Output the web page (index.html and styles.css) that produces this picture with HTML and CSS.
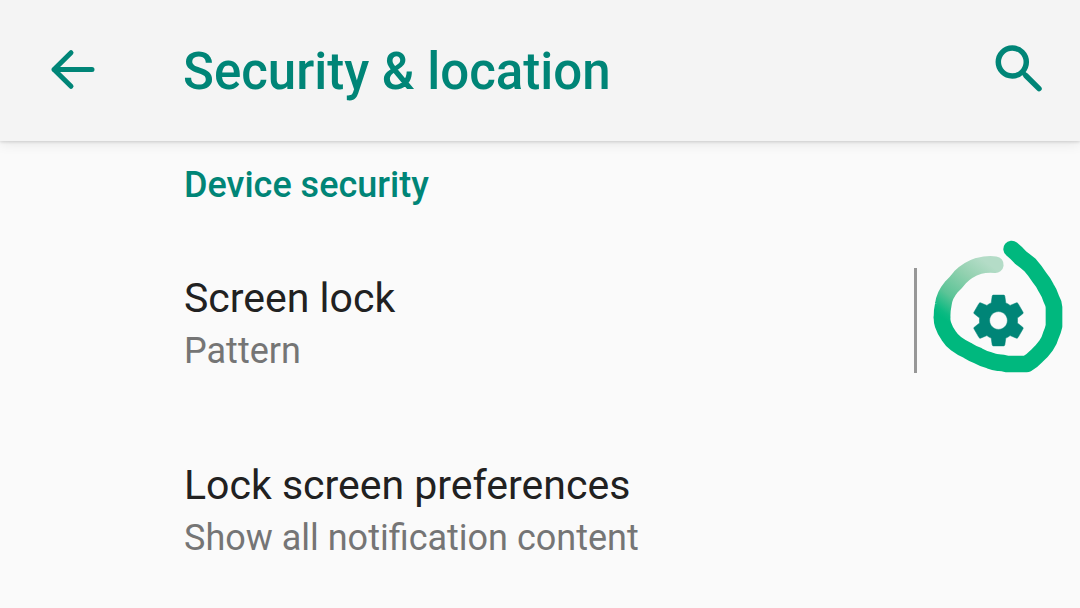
FILE: index.html
```html
<!DOCTYPE html>
<html lang="en">
<head>
<meta charset="utf-8">
<meta name="viewport" content="width=device-width, initial-scale=1">
<title>Security &amp; location</title>
<link rel="stylesheet" href="styles.css">
</head>
<body>
<header class="app-bar">
  <button class="icon-button back" type="button" aria-label="Navigate up">
    <svg class="icon" viewBox="0 0 60 60" aria-hidden="true">
      <path d="M29 12.700L12 29.500L29 46.300M12 29.500H50" fill="none" stroke="currentColor" stroke-width="5" stroke-linecap="round" stroke-linejoin="round"/>
    </svg>
  </button>
  <h1 class="title">Security &amp; location</h1>
  <button class="icon-button search" type="button" aria-label="Search">
    <svg class="icon" viewBox="0 0 60 60" aria-hidden="true">
      <g fill="none" stroke="currentColor" stroke-width="5.500">
        <circle cx="22.300" cy="22" r="14"/>
        <path d="M32 31.700l3 3" stroke-width="4.500"/>
        <path d="M36 35.700L49 48.600" stroke-linecap="round"/>
      </g>
    </svg>
  </button>
</header>
<main class="content">
  <h2 class="section-title">Device security</h2>
  <ul class="preferences">
    <li class="preference">
      <a class="preference-link" href="#screen-lock">
        <span class="name">Screen lock</span>
        <span class="summary">Pattern</span>
      </a>
      <button class="settings" type="button" aria-label="Screen lock settings">
        <svg class="gear" viewBox="0 0 24 24" aria-hidden="true">
          <path fill="currentColor" stroke="currentColor" stroke-width="0.200" stroke-linejoin="round" d="M19.430 12.980c.04-.32.07-.64.07-.98s-.03-.66-.07-.98l2.110-1.650c.19-.15.24-.42.12-.64l-2-3.460c-.12-.22-.39-.3-.61-.22l-2.490 1c-.52-.4-1.080-.73-1.690-.98l-.38-2.650C14.460 2.180 14.250 2 14 2h-4c-.25 0-.46.18-.49.42l-.38 2.650c-.61.25-1.170.59-1.690.98l-2.490-1c-.23-.09-.49 0-.61.22l-2 3.460c-.13.22-.07.49.12.64l2.110 1.650c-.04.32-.07.65-.07.98s.03.66.07.98l-2.110 1.650c-.19.15-.24.42-.12.64l2 3.460c.12.22.39.3.61.22l2.490-1c.52.4 1.080.73 1.690.98l.38 2.650c.03.24.24.42.49.42h4c.25 0 .46-.18.49-.42l.38-2.650c.61-.25 1.170-.59 1.690-.98l2.490 1c.23.09.49 0 .61-.22l2-3.460c.12-.22.07-.49-.12-.64l-2.110-1.650zM12 15.500c-1.930 0-3.500-1.570-3.500-3.500s1.570-3.500 3.500-3.500 3.500 1.570 3.500 3.500-1.570 3.500-3.500 3.500z"/>
        </svg>
        <svg class="highlight" viewBox="51 114 489 315" aria-hidden="true">
          <defs>
            <linearGradient id="fade" gradientUnits="userSpaceOnUse" x1="125" y1="262" x2="250" y2="90">
              <stop offset="0" stop-color="#00b87e"/>
              <stop offset="0.080" stop-color="#0cba82"/>
              <stop offset="0.320" stop-color="#5cc497"/>
              <stop offset="0.700" stop-color="#93d1b0"/>
              <stop offset="1" stop-color="#b4dcc7"/>
            </linearGradient>
          </defs>
          <g fill="none" stroke-width="50" stroke-linecap="round" stroke-linejoin="round">
            <path stroke="#00b87e" d="M335 57Q350 69 362 83Q378 95 390 105Q406 123 418 142Q430 156 438 173Q448 188 454 207Q461 219 462 232V288Q459 302 453 315Q448 334 438 347Q426 364 410 378Q397 392 380 402H321Q308 398 296 398Q282 396 268 391Q250 386 234 377Q218 371 204 362Q185 354 168 341Q155 331 146 317Q135 302 129 284Q126 274 126 264"/>
            <path stroke="url(#fade)" d="M286 104Q262 101 235 108Q204 118 181 141Q168 158 154 171Q133 196 130 223Q126 240 126 262"/>
          </g>
        </svg>
      </button>
    </li>
    <li class="preference">
      <a class="preference-link" href="#lock-screen">
        <span class="name">Lock screen preferences</span>
        <span class="summary">Show all notification content</span>
      </a>
    </li>
  </ul>
</main>
</body>
</html>
```
FILE: styles.css
```css
* {
  box-sizing: border-box;
}

body {
  margin: 0;
  background: #fafafa;
  color: #212121;
  font-family: Roboto, "Liberation Sans", sans-serif;
}

button {
  margin: 0;
  padding: 0;
  border: 0;
  background: none;
  color: inherit;
  font: inherit;
  cursor: pointer;
}

.app-bar {
  position: relative;
  display: flex;
  align-items: center;
  padding: 40px 30px 37px 42px;
  background: #f4f4f4;
  color: #008577;
  box-shadow: 0 1px 3px rgba(0, 0, 0, 0.14), 0 3px 12px rgba(0, 0, 0, 0.08);
}

.icon-button {
  flex: none;
  align-self: flex-start;
  display: flex;
}

.icon {
  width: 60px;
  height: 60px;
}

.title {
  flex: 1;
  margin: 0;
  padding-left: 81px;
  font-size: 51px;
  font-weight: 500;
  line-height: 64px;
}

.section-title {
  margin: 0;
  padding: 22px 40px 0 184px;
  color: #008577;
  font-size: 36px;
  font-weight: 500;
  line-height: 44px;
}

.preferences {
  margin: 0;
  padding: 61px 0 40px;
  list-style: none;
  display: flex;
  flex-direction: column;
  gap: 82px;
}

.preference {
  display: flex;
}

.preference-link {
  flex: 1;
  display: flex;
  flex-direction: column;
  gap: 2px;
  padding: 0 0 0 184px;
  color: inherit;
  text-decoration: none;
}

.name {
  font-size: 41px;
  line-height: 60px;
}

.summary {
  color: #757575;
  font-size: 36px;
  line-height: 43px;
}

.settings {
  position: relative;
  flex: none;
  width: 166px;
  border-left: 3px solid #979797;
  color: #008577;
  display: grid;
  place-items: center;
}

.gear {
  width: 61px;
  height: 61px;
}

.highlight {
  position: absolute;
  inset: 0;
  width: 100%;
  height: 100%;
  overflow: visible;
}
```
